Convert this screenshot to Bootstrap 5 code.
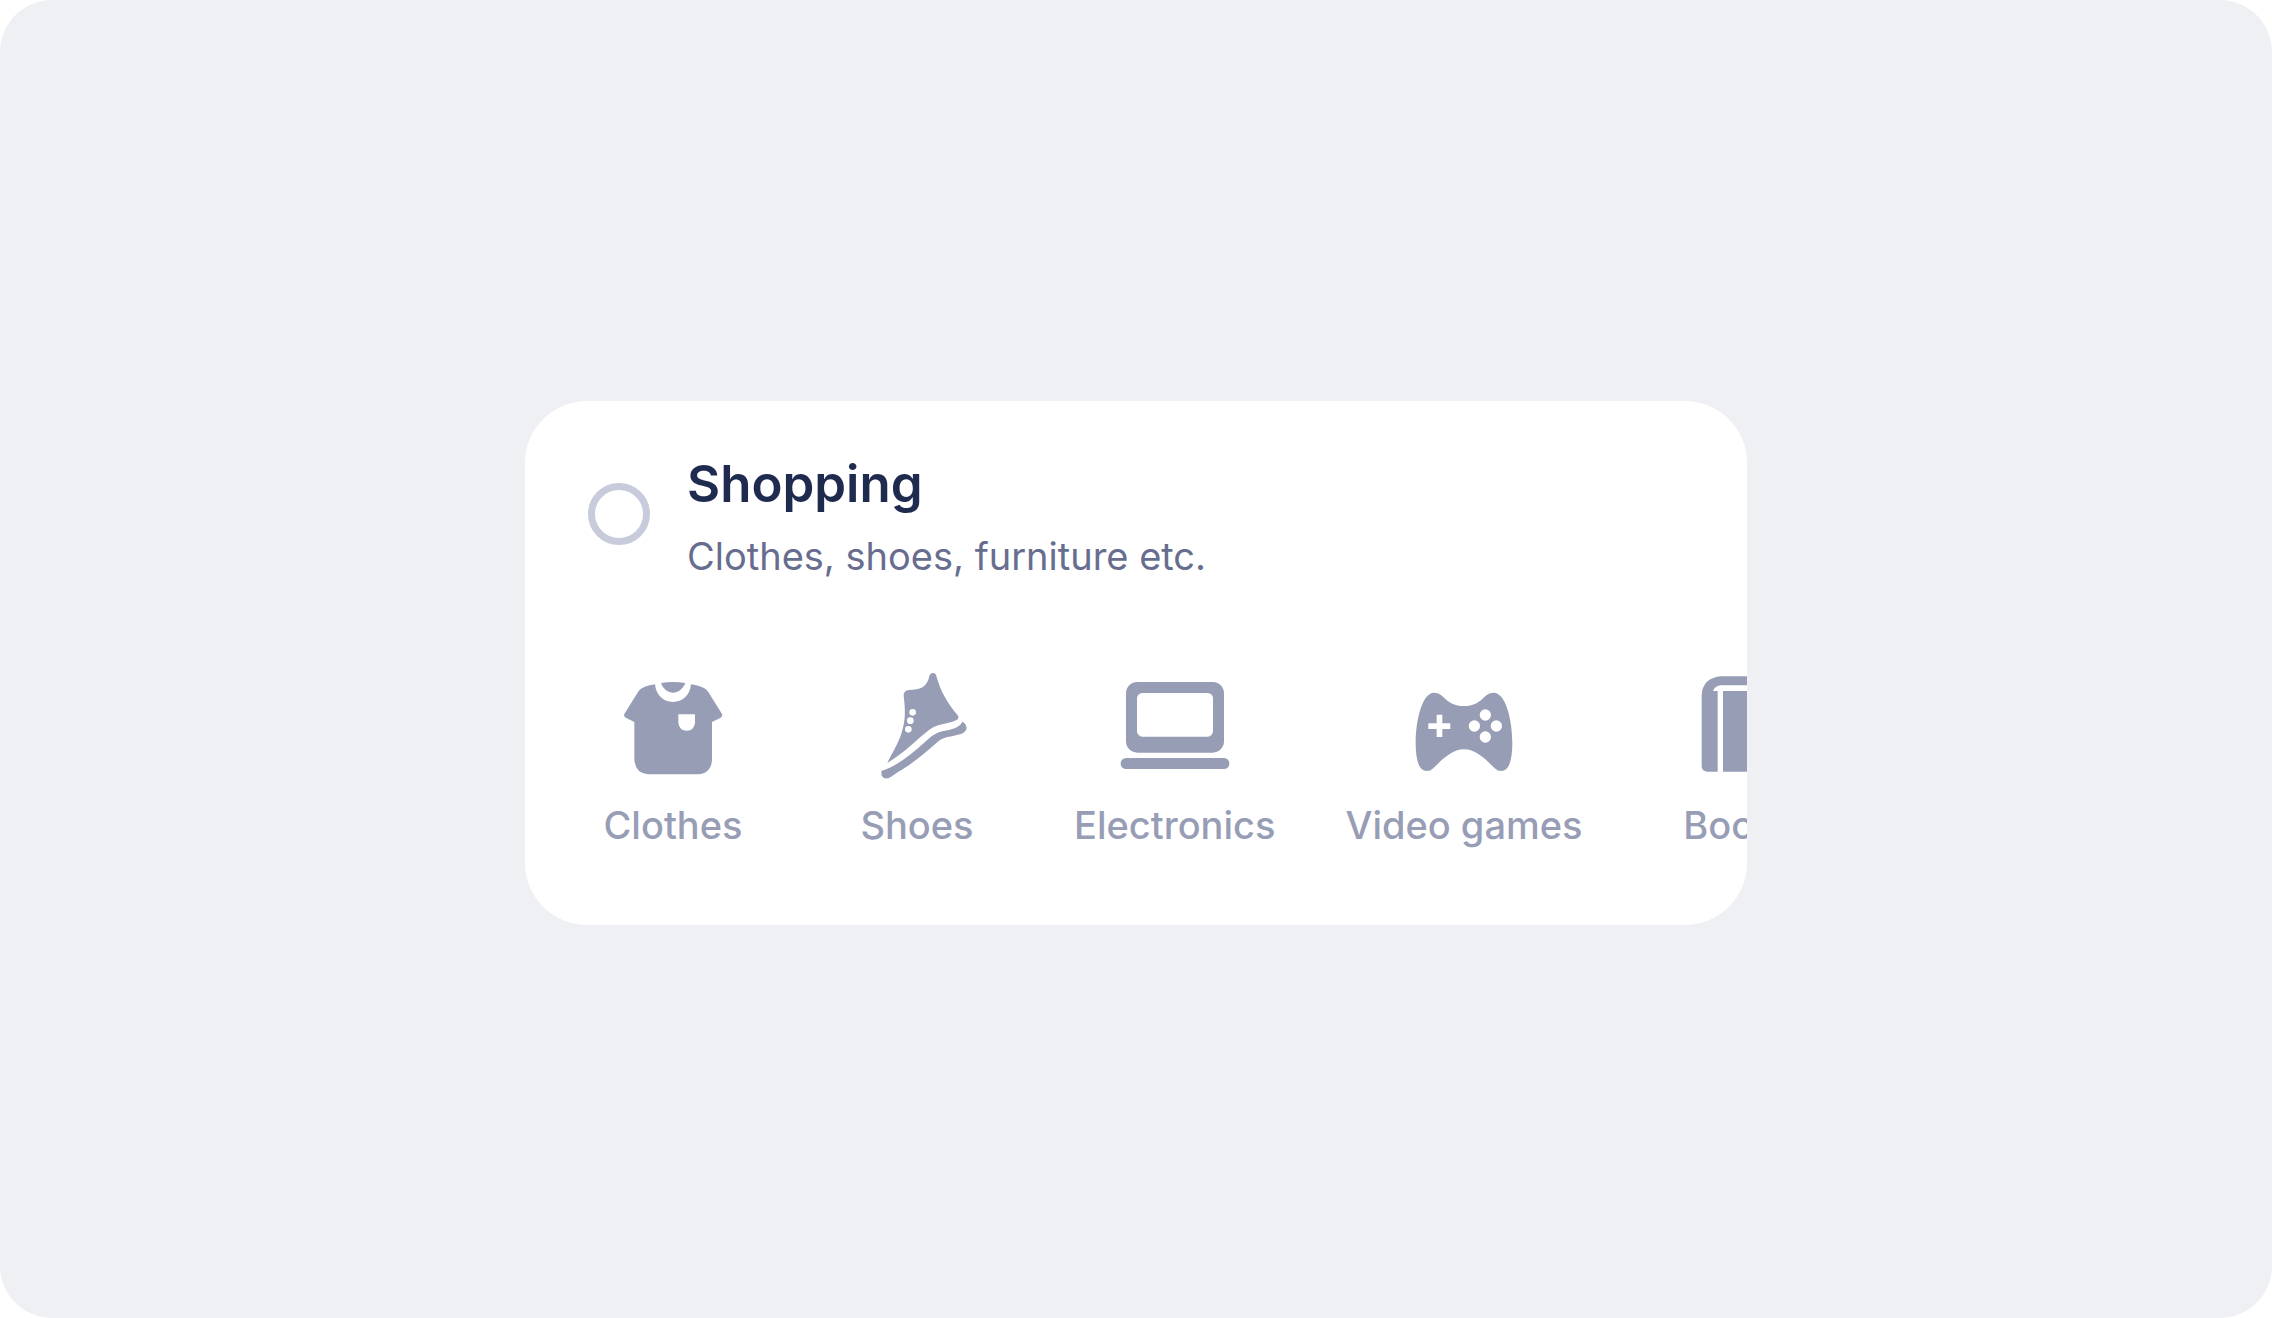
<!DOCTYPE html>
<html lang="en">
<head>
<meta charset="utf-8">
<meta name="viewport" content="width=device-width, initial-scale=1">
<title>Shopping</title>
<link href="https://cdn.jsdelivr.net/npm/bootstrap@5.3.0/dist/css/bootstrap.min.css" rel="stylesheet">
<style>
  body { background: #fff; font-family: Inter, "Liberation Sans", sans-serif; }
  .stage { background: #eff0f4; border-radius: 52px; padding-top: 8px; }
  .category { width: 54%; max-width: 1222px; min-width: 320px; border-radius: 62px; }
  .category-head { padding: 55px 63px 87px; gap: 37px; }
  .category-head .form-check-input {
    width: 62px; height: 62px; margin-top: 27px; border: 7px solid #c8cbdc; background-color: #fff;
  }
  .category-title { font-size: 51px; line-height: 56px; font-weight: 600; color: #1f2a4f; margin-bottom: 20px; }
  .category-note { font-size: 38px; line-height: 48px; color: #676d8e; }
  .kinds { padding: 0 26px 76px; }
  .kind { min-width: 244px; padding: 0 35px; color: #989db6; font-size: 38px; line-height: 48px; font-weight: 500; }
  .kind svg { width: 120px; height: 120px; fill: currentColor; margin-bottom: 14px; }
  .kind .cut { fill: #fff; }
</style>
<script src="https://cdn.jsdelivr.net/npm/bootstrap@5.3.0/dist/js/bootstrap.bundle.min.js"></script>
</head>
<body>
<main class="stage min-vh-100 d-flex align-items-center justify-content-center">
  <section class="category bg-white overflow-hidden">
    <div class="category-head d-flex align-items-start">
      <input class="form-check-input flex-shrink-0" type="radio" name="category" id="shopping">
      <label for="shopping">
        <span class="category-title d-block">Shopping</span>
        <span class="category-note d-block">Clothes, shoes, furniture etc.</span>
      </label>
    </div>
    <nav class="kinds d-flex" aria-label="Shopping categories">
      <a href="#clothes" class="kind d-flex flex-column align-items-center flex-shrink-0 text-nowrap text-decoration-none">
        <svg viewBox="99 48 360 360" aria-hidden="true">
          <path d="M225 100C228 134 251 153 279 153S330 134 333 100C355 104 375 108 385 123L426 189Q429 196 422 200L396 213V326Q394 367 354 370H204Q166 367 163 326V213L137 200Q130 196 133 189L174 123C184 108 202 104 225 100Z"/>
          <path d="M243 96Q279 90 316 96C308 115 294 125 279 125S250 115 243 96Z"/>
          <path class="cut" d="M295 190H345V216Q342 239 320 239T295 216Z"/>
        </svg>
        <span>Clothes</span>
      </a>
      <a href="#shoes" class="kind d-flex flex-column align-items-center flex-shrink-0 text-nowrap text-decoration-none">
        <svg viewBox="51 48 360 360" aria-hidden="true">
          <path d="M268 75Q271 66 279 66T289 75C302 123 324 158 353 193Q359 200 351 206C331 218 302 216 280 229C251 246 220 280 190 302C174 314 157 326 142 336C151 315 174 280 184 248C199 204 195 170 191 135Q190 119 207 117C240 117 262 108 268 75Z"/>
          <path d="M368 212Q379 219 380 232Q377 244 363 249C338 257 315 256 297 269C258 302 218 339 174 363L149 380Q133 387 125 374L124 360C172 345 218 307 255 273C286 242 302 242 329 236Q357 230 368 212Z"/>
          <g class="cut"><circle cx="218" cy="184" r="10"/><circle cx="211" cy="209" r="10"/><circle cx="205" cy="235" r="10"/></g>
        </svg>
        <span>Shoes</span>
      </a>
      <a href="#electronics" class="kind d-flex flex-column align-items-center flex-shrink-0 text-nowrap text-decoration-none">
        <svg viewBox="165 48 360 360" aria-hidden="true">
          <rect x="198" y="93" width="294" height="212" rx="34"/>
          <rect class="cut" x="231" y="126" width="228" height="131" rx="16"/>
          <rect x="182" y="321" width="326" height="33" rx="16"/>
        </svg>
        <span>Electronics</span>
      </a>
      <a href="#video-games" class="kind d-flex flex-column align-items-center flex-shrink-0 text-nowrap text-decoration-none">
        <svg viewBox="220 48 360 360" aria-hidden="true">
          <path d="M310 125C342 125 344 165 400 165S457 125 489 125C525 125 545 206 545 277C545 330 534 360 511 360Q501 360 494 353C468 329 438 295 400 295S332 329 306 353Q299 360 289 360C266 360 255 330 255 277C255 206 275 125 310 125Z"/>
          <g class="cut">
            <path d="M318 191H335V217H359V234H335V258H318V234H293V217H318Z"/>
            <circle cx="464" cy="192" r="17"/><circle cx="431" cy="225" r="17"/><circle cx="497" cy="225" r="17"/><circle cx="464" cy="258" r="17"/>
          </g>
        </svg>
        <span>Video games</span>
      </a>
      <a href="#books" class="kind d-flex flex-column align-items-center flex-shrink-0 text-nowrap text-decoration-none">
        <svg viewBox="119 78 360 360" aria-hidden="true">
          <path d="M240 106H404V133H240Q222 137 218 150H232V392H200Q184 390 184 376V162Q187 112 240 106Z"/>
          <path d="M248 150H404V392H248Z"/>
        </svg>
        <span>Books</span>
      </a>
    </nav>
  </section>
</main>
</body>
</html>
